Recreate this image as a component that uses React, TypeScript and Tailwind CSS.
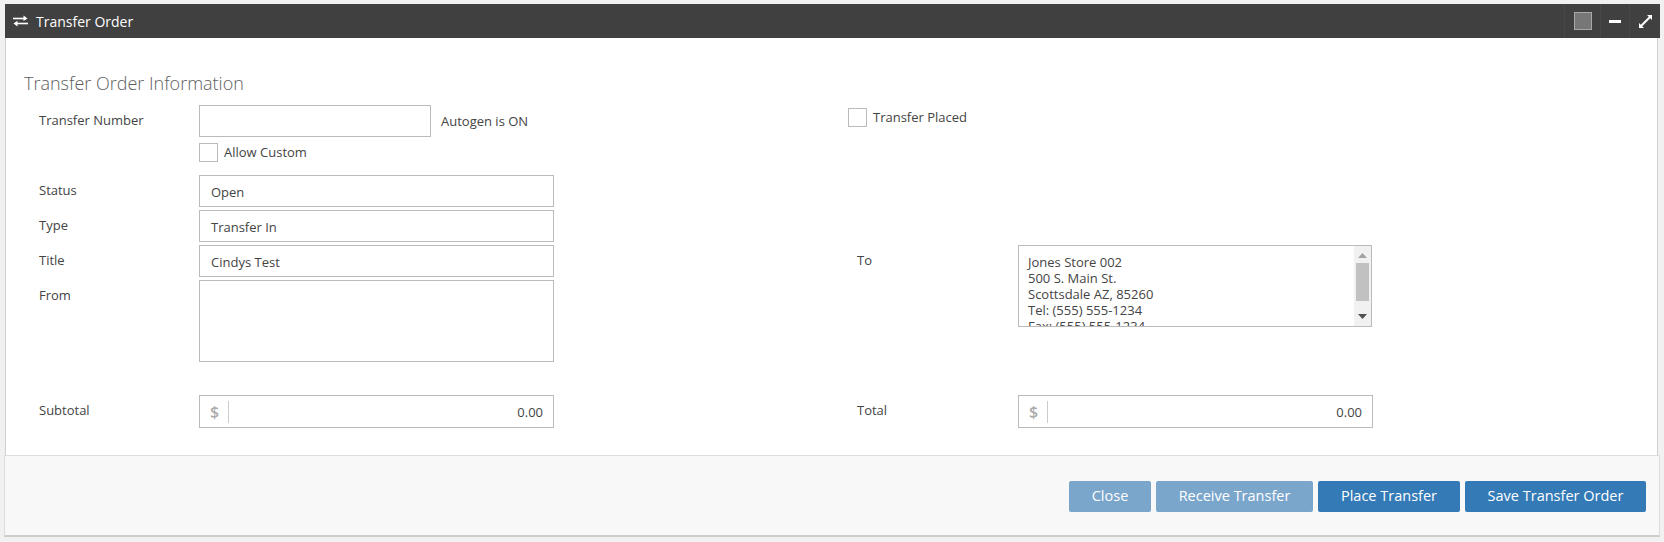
import React from "react";

const font = { fontFamily: '"Open Sans", sans-serif' };

function Box({ children, className = "" }: { children?: React.ReactNode; className?: string }) {
  return (
    <div className={`border border-[#bbbbbb] bg-white text-[13px] text-[#444444] ${className}`}>{children}</div>
  );
}

function Label({ text, right }: { text: string; right?: boolean }) {
  return (
    <div className={`w-[193px] pt-[5px] text-[13px] leading-[20px] text-[#444444] ${right ? "pl-[32px]" : "pl-[33px]"}`}>{text}</div>
  );
}

function Field({ label, value }: { label: string; value: string }) {
  return (
    <div className="flex h-[32px] mb-[3px]">
      <Label text={label} />
      <Box className="w-[355px] h-[32px] pl-[11px] leading-[33px]">{value}</Box>
    </div>
  );
}

function Money({ label, right }: { label: string; right?: boolean }) {
  return (
    <div className="flex h-[33px]">
      <Label text={label} right={right} />
      <Box className="w-[355px] h-[33px] flex items-center">
        <span className="w-[29px] h-[22px] border-r border-[#cccccc] pl-[10px] text-[16px] leading-[22px] font-semibold text-[#aaaaaa]">$</span>
        <span className="flex-1 text-right pr-[10px] leading-[33px] pt-[1px]">0.00</span>
      </Box>
    </div>
  );
}

function Check({ label }: { label: string }) {
  return (
    <div className="flex items-center h-[19px]">
      <div className="w-[19px] h-[19px] border border-[#bbbbbb] bg-white" />
      <span className="ml-[6px] text-[13px] text-[#444444]">{label}</span>
    </div>
  );
}

function Btn({ label, w, faded }: { label: string; w: string; faded?: boolean }) {
  return (
    <button
      className={`h-[31px] rounded-[2px] text-[14.5px] text-white ${w} ${faded ? "bg-[#7aa6cc]" : "bg-[#337ab7]"}`}
    >
      {label}
    </button>
  );
}

export default function App() {
  return (
    <div className="h-[542px] w-[1664px] bg-[#f1f1f1] pt-[4px] pl-[5px] pr-[4px]" style={font}>
      <div className="h-[34px] bg-[#404040] flex items-center text-white">
        <svg className="ml-[8px] w-[15px] h-[12px]" viewBox="0 0 15 12" fill="none" stroke="#ffffff">
          <path d="M0 3.5H13" strokeWidth="1.6" />
          <path d="M10.5 0.5L14.5 3.5L10.5 6" strokeWidth="0" fill="#ffffff" />
          <path d="M15 8.5H2" strokeWidth="1.6" />
          <path d="M4.5 5.8L0.5 8.5L4.5 11.5" strokeWidth="0" fill="#ffffff" />
        </svg>
        <span className="ml-[8px] pt-[1px] text-[14px]">Transfer Order</span>
        <div className="ml-auto h-full flex items-center">
          <div className="h-full w-[36px] border-l border-[#484848] flex items-center justify-center">
            <div className="w-[18px] h-[18px] bg-[#777777] border-[1.5px] border-[#a8a8a8]" />
          </div>
          <div className="h-full w-[29px] border-l border-[#484848] flex items-center justify-center">
            <div className="w-[12px] h-[3px] bg-white" />
          </div>
          <div className="h-full w-[31px] border-l border-[#484848] flex items-center justify-center">
            <svg className="w-[13px] h-[13px]" viewBox="0 0 13 13" fill="#ffffff">
              <path d="M8 0H13V5L11.2 3.2L3.2 11.2L5 13H0V8L1.8 9.8L9.8 1.8Z" />
            </svg>
          </div>
        </div>
      </div>

      <div className="h-[417px] border-x border-[#cfcfcf] mr-[2px] bg-white">
        <div className="pl-[18px] pt-[32px] h-[67px] text-[18px] leading-[26px] font-light text-[#5e5e5e]">
          Transfer Order Information
        </div>

        <div className="flex">
          <div className="w-[819px]">
            <div className="flex h-[32px]">
              <Label text="Transfer Number" />
              <Box className="w-[232px] h-[32px]" />
              <div className="ml-[10px] pt-[6px] text-[13px] leading-[20px] text-[#444444]">Autogen is ON</div>
            </div>
            <div className="ml-[193px] mt-[6px] mb-[13px]">
              <Check label="Allow Custom" />
            </div>
            <Field label="Status" value="Open" />
            <Field label="Type" value="Transfer In" />
            <Field label="Title" value="Cindys Test" />
            <div className="flex h-[82px]">
              <Label text="From" />
              <Box className="w-[355px] h-[82px]" />
            </div>
          </div>

          <div>
            <div className="ml-[23px] mt-[3px] mb-[118px]">
              <Check label="Transfer Placed" />
            </div>
            <div className="flex">
              <Label text="To" right />
              <Box className="w-[354px] h-[82px] flex overflow-hidden">
                <div className="flex-1 pl-[9px] pt-[8px] text-[13px] leading-[16px] overflow-hidden">
                  <div>Jones Store 002</div>
                  <div>500 S. Main St.</div>
                  <div>Scottsdale AZ, 85260</div>
                  <div>Tel: (555) 555-1234</div>
                  <div>Fax: (555) 555-1234</div>
                </div>
                <div className="w-[17px] bg-[#f1f1f1] flex flex-col items-center">
                  <svg className="w-[9px] h-[5px] mt-[7px]" viewBox="0 0 9 5" fill="#a3a3a3"><path d="M4.5 0L9 5H0Z" /></svg>
                  <div className="w-[13px] h-[38px] mt-[5px] bg-[#c1c1c1]" />
                  <svg className="w-[9px] h-[5px] mt-[13px]" viewBox="0 0 9 5" fill="#505050"><path d="M0 0H9L4.5 5Z" /></svg>
                </div>
              </Box>
            </div>
          </div>
        </div>

        <div className="flex mt-[33px]">
          <div className="w-[819px]"><Money label="Subtotal" /></div>
          <Money label="Total" right />
        </div>
      </div>

      <div className="h-[82px] -ml-[1px] bg-[#f8f8f8] border-t border-x border-[#dddddd] border-b-2 border-b-[#cccccc] flex items-center justify-end gap-[5px] pr-[13px] pt-[1px]">
        <Btn label="Close" w="w-[82px]" faded />
        <Btn label="Receive Transfer" w="w-[157px]" faded />
        <Btn label="Place Transfer" w="w-[142px]" />
        <Btn label="Save Transfer Order" w="w-[181px]" />
      </div>
    </div>
  );
}
